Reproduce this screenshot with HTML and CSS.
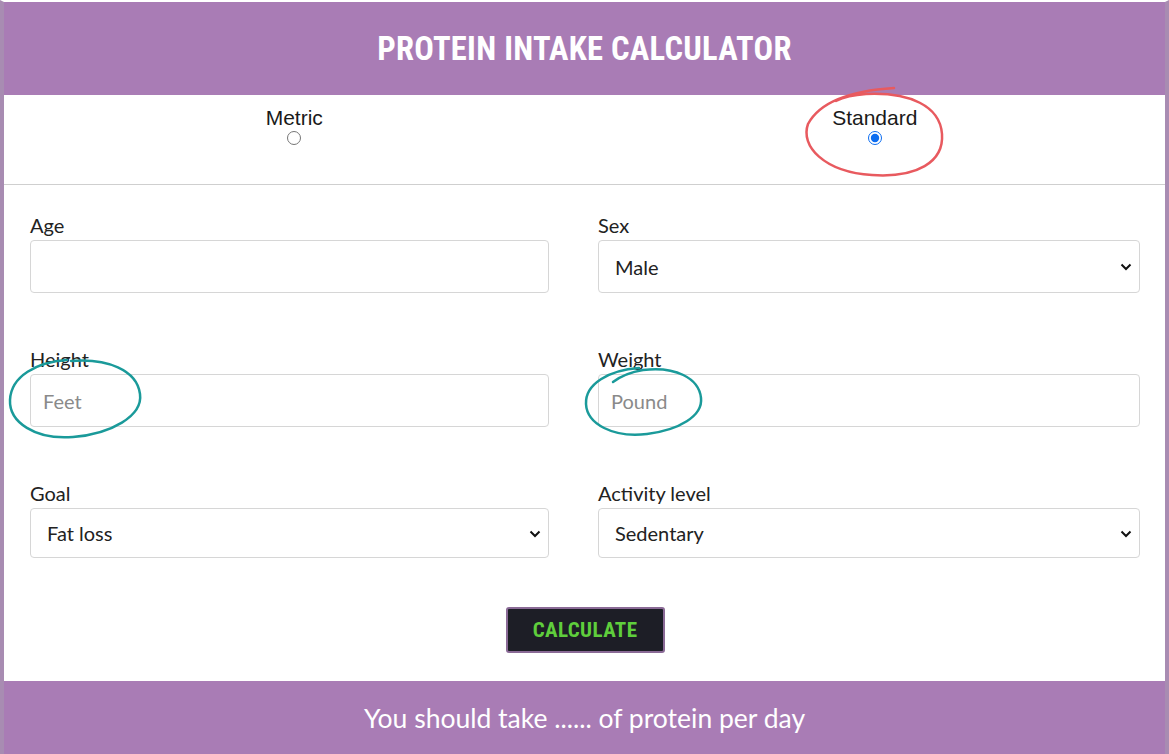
FILE: index.html
```html
<!DOCTYPE html>
<html>
<head>
<meta charset="utf-8">
<link rel="stylesheet" href="styles.css">
</head>
<body>
<div class="frame">
  <header class="header"><h1 class="title">PROTEIN INTAKE CALCULATOR</h1></header>
  <div class="units">
    <label class="unit"><span class="unit-name">Metric</span><input type="radio" name="unit" class="radio"></label>
    <label class="unit"><span class="unit-name">Standard</span><input type="radio" name="unit" class="radio" checked></label>
  </div>
  <form class="form">
    <div class="grid">
      <div class="field">
        <label class="lbl">Age</label>
        <input class="ctl" type="text">
      </div>
      <div class="field">
        <label class="lbl">Sex</label>
        <div class="sel-wrap">
          <select class="ctl sel"><option>Male</option><option>Female</option></select>
          <svg class="chev" width="12" height="8" viewBox="0 0 12 8"><path d="M1.5 1.5 L6 6 L10.5 1.5" fill="none" stroke="#111" stroke-width="2"/></svg>
        </div>
      </div>
      <div class="field">
        <label class="lbl">Height</label>
        <input class="ctl" type="text" placeholder="Feet">
      </div>
      <div class="field">
        <label class="lbl">Weight</label>
        <input class="ctl" type="text" placeholder="Pound">
      </div>
      <div class="field">
        <label class="lbl">Goal</label>
        <div class="sel-wrap">
          <select class="ctl sel short"><option>Fat loss</option><option>Muscle gain</option></select>
          <svg class="chev chev-short" width="12" height="8" viewBox="0 0 12 8"><path d="M1.5 1.5 L6 6 L10.5 1.5" fill="none" stroke="#111" stroke-width="2"/></svg>
        </div>
      </div>
      <div class="field">
        <label class="lbl">Activity level</label>
        <div class="sel-wrap">
          <select class="ctl sel short"><option>Sedentary</option><option>Active</option></select>
          <svg class="chev chev-short" width="12" height="8" viewBox="0 0 12 8"><path d="M1.5 1.5 L6 6 L10.5 1.5" fill="none" stroke="#111" stroke-width="2"/></svg>
        </div>
      </div>
    </div>
    <div class="actions"><button type="button" class="btn">CALCULATE</button></div>
  </form>
  <footer class="result">You should take ...... of protein per day</footer>

  <svg class="mark mark-red" width="150" height="100" viewBox="0 0 150 100">
    <path d="M92 4 C60 6 20 14 6 40 C-2 62 22 88 70 91 C115 94 142 78 140 50 C138 22 108 8 64 10 C50 11 40 14 34 17" fill="none" stroke="#e85a5f" stroke-width="2.5" stroke-linecap="round"/>
  </svg>
  <svg class="mark mark-teal1" width="140" height="90" viewBox="0 0 140 90">
    <path d="M60 4 C30 6 4 20 3 44 C2 66 28 84 66 81 C104 78 136 60 133 38 C130 14 100 2 64 5" fill="none" stroke="#1a9a9a" stroke-width="2.5" stroke-linecap="round"/>
  </svg>
  <svg class="mark mark-teal2" width="126" height="80" viewBox="0 0 126 80">
    <path d="M56 6 C26 8 2 22 3 42 C4 62 30 76 64 72 C96 68 120 54 118 36 C116 16 92 4 60 8 C48 10 38 14 30 20" fill="none" stroke="#1a9a9a" stroke-width="2.5" stroke-linecap="round"/>
  </svg>
</div>
</body>
</html>
```
FILE: styles.css
```css
* { box-sizing: border-box; }
html, body { margin: 0; padding: 0; background: #fff; }
.frame {
  position: relative;
  width: 1169px;
  height: 754px;
  border-left: 4px solid #a88cb2;
  border-right: 4px solid #a88cb2;
  border-top: 2px solid #fff;
  overflow: hidden;
  font-family: Lato, "Liberation Sans", sans-serif;
  color: #222;
}
.header {
  background: #a97cb5;
  height: 93px;
  display: flex;
  align-items: center;
  justify-content: center;
}
.title {
  margin: 0;
  color: #fff;
  font-family: "Roboto Condensed", "Liberation Sans Narrow", "DejaVu Sans Condensed", Roboto, sans-serif;
  font-weight: 700;
  font-size: 32.5px;
  letter-spacing: 0.3px;
}
.units {
  height: 90px;
  display: flex;
  border-bottom: 1px solid #cfcfcf;
}
.unit {
  flex: 1;
  display: flex;
  flex-direction: column;
  align-items: center;
  padding-top: 11px;
  font-family: "Liberation Sans", Arial, sans-serif;
  font-size: 21px;
  color: #1a1a1a;
}
.unit-name { line-height: 24px; }
.radio { margin: 1px 0 0; width: 14px; height: 14px; accent-color: #0b6cf0; }
.form { padding: 28px 25px 0 26px; }
.grid {
  display: grid;
  grid-template-columns: 519px 542px;
  column-gap: 49px;
  row-gap: 54px;
}
.field { display: flex; flex-direction: column; }
.lbl {
  font-size: 20px;
  line-height: 24px;
  height: 24px;
  margin-bottom: 3px;
  color: #222;
}
.ctl {
  height: 53px;
  width: 100%;
  border: 1px solid #d6d6d6;
  border-radius: 4px;
  background: #fff;
  font-family: Lato, sans-serif;
  font-size: 20px;
  color: #222;
  padding: 0 12px;
  outline: none;
}
.ctl::placeholder { color: #8a8a8a; }
.sel-wrap { position: relative; }
.sel {
  -webkit-appearance: none;
  appearance: none;
  padding-left: 16px;
}
.short { height: 50px; }
.chev { position: absolute; right: 8px; top: 23px; pointer-events: none; }
.chev-short { top: 22px; }
.actions { display: flex; justify-content: center; padding-top: 49px; }
.btn {
  width: 159px;
  height: 46px;
  background: #1d1e26;
  border: 2px solid #8a6a96;
  border-radius: 3px;
  color: #5fce3c;
  font-family: "Roboto Condensed", "Liberation Sans Narrow", "DejaVu Sans Condensed", Roboto, sans-serif;
  font-weight: 700;
  font-size: 21px;
  letter-spacing: 0.4px;
  padding: 0;
}
.result {
  position: absolute;
  left: 0; right: 0; bottom: 0;
  height: 73px;
  background: #a97cb5;
  color: #fff;
  display: flex;
  align-items: center;
  justify-content: center;
  font-family: Lato, sans-serif;
  font-size: 26.5px;
}
.mark { position: absolute; pointer-events: none; }
.mark-red { left: 798px; top: 82px; }
.mark-teal1 { left: 3px; top: 354px; }
.mark-teal2 { left: 579px; top: 360px; }
```
